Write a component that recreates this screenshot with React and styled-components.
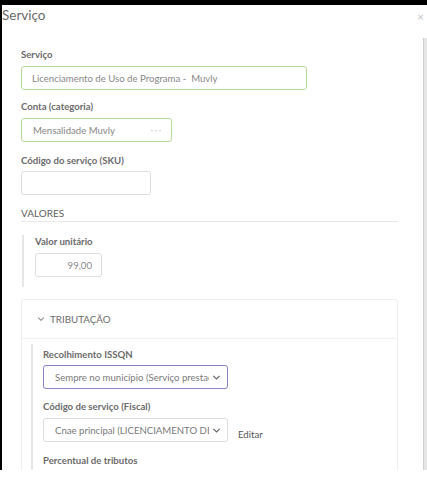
import React from "react";
import styled, { createGlobalStyle } from "styled-components";

const Global = createGlobalStyle`
  html, body { margin: 0; padding: 0; background: #fff; }
  body { font-family: Lato, "Open Sans", sans-serif; width: 427px; height: 490px; overflow: hidden; }
  * { box-sizing: border-box; }
`;

const Window = styled.div`
  width: 427px;
  height: 470px;
  border-top: 5px solid #000;
  border-left: 2px solid #000;
  background: #fff;
  display: flex;
  flex-direction: column;
  overflow: hidden;
`;

const Header = styled.div`
  height: 33px;
  display: flex;
  align-items: flex-start;
  justify-content: space-between;
  padding-top: 2px;
  flex-shrink: 0;
`;

const Title = styled.h4`
  margin: 0;
  font-size: 13.5px;
  font-weight: 400;
  color: #6a6a6a;
  line-height: 16px;
`;

const Close = styled.span`
  font-size: 12px;
  color: #c8c8c8;
  line-height: 12px;
  margin-right: 3px;
  margin-top: 4px;
`;

const Body = styled.div`
  flex: 1;
  display: flex;
  min-height: 0;
`;

const Content = styled.div`
  flex: 1;
  padding: 11px 0 0 19px;
  overflow: hidden;
`;

const Scrollbar = styled.div`
  width: 4px;
  background: #e6e6e6;
  border-left: 1px solid #cfcfcf;
  flex-shrink: 0;
`;

const Form = styled.div`
  width: 377px;
`;

const Label = styled.div`
  font-size: 9.6px;
  font-weight: 700;
  color: #6b6b6b;
  line-height: 12px;
  margin-top: ${(p) => p.$mt || 0}px;
  margin-bottom: ${(p) => p.$mb ?? 5}px;
`;

const borderColors = {
  green: "#b6dc9d",
  grey: "#dedede",
  purple: "#8c80c8",
};

const Input = styled.div`
  width: ${(p) => p.$w}px;
  height: 24px;
  border: 1px solid ${(p) => borderColors[p.$tone || "grey"]};
  border-radius: 3px;
  background: #fff;
  display: flex;
  align-items: center;
  justify-content: ${(p) => (p.$right ? "flex-end" : "space-between")};
  padding: 0 ${(p) => p.$pr || 8}px 0 ${(p) => p.$pl || 9}px;
  font-size: 9.6px;
  color: #888;
  white-space: nowrap;
  overflow: hidden;
`;

const Dots = styled.span`
  color: #b8b8b8;
  letter-spacing: 2px;
  font-size: 8px;
`;

const SectionTitle = styled.div`
  margin-top: 12px;
  font-size: 10px;
  color: #5e5e5e;
  line-height: 12px;
  padding-bottom: 2px;
  border-bottom: 1px solid #e8e8e8;
`;

const Indented = styled.div`
  margin-top: ${(p) => p.$mt || 0}px;
  margin-left: ${(p) => p.$ml || 1}px;
  border-left: 2px solid #e6e6e6;
  padding: ${(p) => p.$pt || 0}px 0 ${(p) => p.$pb || 0}px ${(p) => p.$pl || 11}px;
`;

const Panel = styled.div`
  margin-top: 12px;
  border: 1px solid #efefef;
  border-radius: 3px;
  border-bottom: none;
`;

const PanelHeader = styled.div`
  height: 39px;
  display: flex;
  align-items: center;
  gap: 5px;
  padding-left: 15px;
  font-size: 9.8px;
  color: #6b6b6b;
  border-bottom: 1px solid #f0f0f0;
`;

const SelectText = styled.span`
  overflow: hidden;
  width: 154px;
  white-space: nowrap;
  color: #7a7a7a;
`;

const Row = styled.div`
  display: flex;
  align-items: flex-end;
  gap: 10px;
`;

const Link = styled.span`
  font-size: 9.6px;
  color: #555;
  line-height: 12px;
  margin-bottom: 1px;
`;

const Chevron = ({ size = 9, color = "#666" }) => (
  <svg width={size} height={size} viewBox="0 0 10 10" fill="none">
    <path d="M1.5 3.2 L5 6.7 L8.5 3.2" stroke={color} strokeWidth="1.3" />
  </svg>
);

export default function App() {
  return (
    <>
      <Global />
      <Window>
        <Header>
          <Title>Serviço</Title>
          <Close>×</Close>
        </Header>
        <Body>
          <Content>
            <Form>
              <Label>Serviço</Label>
              <Input $w={286} $tone="green" $pl={10}>
                Licenciamento de Uso de Programa -&nbsp; Muvly
              </Input>

              <Label $mt={11}>Conta (categoria)</Label>
              <Input $w={151} $tone="green" $pl={11}>
                Mensalidade Muvly
                <Dots>···</Dots>
              </Input>

              <Label $mt={13} $mb={4}>Código do serviço (SKU)</Label>
              <Input $w={130} />

              <SectionTitle>VALORES</SectionTitle>

              <Indented $mt={13} $pt={1} $pb={10}>
                <Label>Valor unitário</Label>
                <Input $w={67} $right $pr={9}>
                  99,00
                </Input>
              </Indented>

              <Panel>
                <PanelHeader>
                  <Chevron size={8} color="#888" />
                  TRIBUTAÇÃO
                </PanelHeader>
                <Indented $mt={5} $pt={5} $ml={9} $pl={10}>
                  <Label $mb={4}>Recolhimento ISSQN</Label>
                  <Input $w={185} $tone="purple" $pl={11} $pr={6}>
                    <SelectText>Sempre no município (Serviço prestado no município)</SelectText>
                    <Chevron />
                  </Input>

                  <Label $mt={12}>Código de serviço (Fiscal)</Label>
                  <Row>
                    <Input $w={185} $pl={11} $pr={6}>
                      <SelectText>Cnae principal (LICENCIAMENTO DE PROGRAMAS)</SelectText>
                      <Chevron />
                    </Input>
                    <Link>Editar</Link>
                  </Row>

                  <Label $mt={13} $mb={3}>Percentual de tributos</Label>
                  <Input $w={140} />
                </Indented>
              </Panel>
            </Form>
          </Content>
          <Scrollbar />
        </Body>
      </Window>
    </>
  );
}
